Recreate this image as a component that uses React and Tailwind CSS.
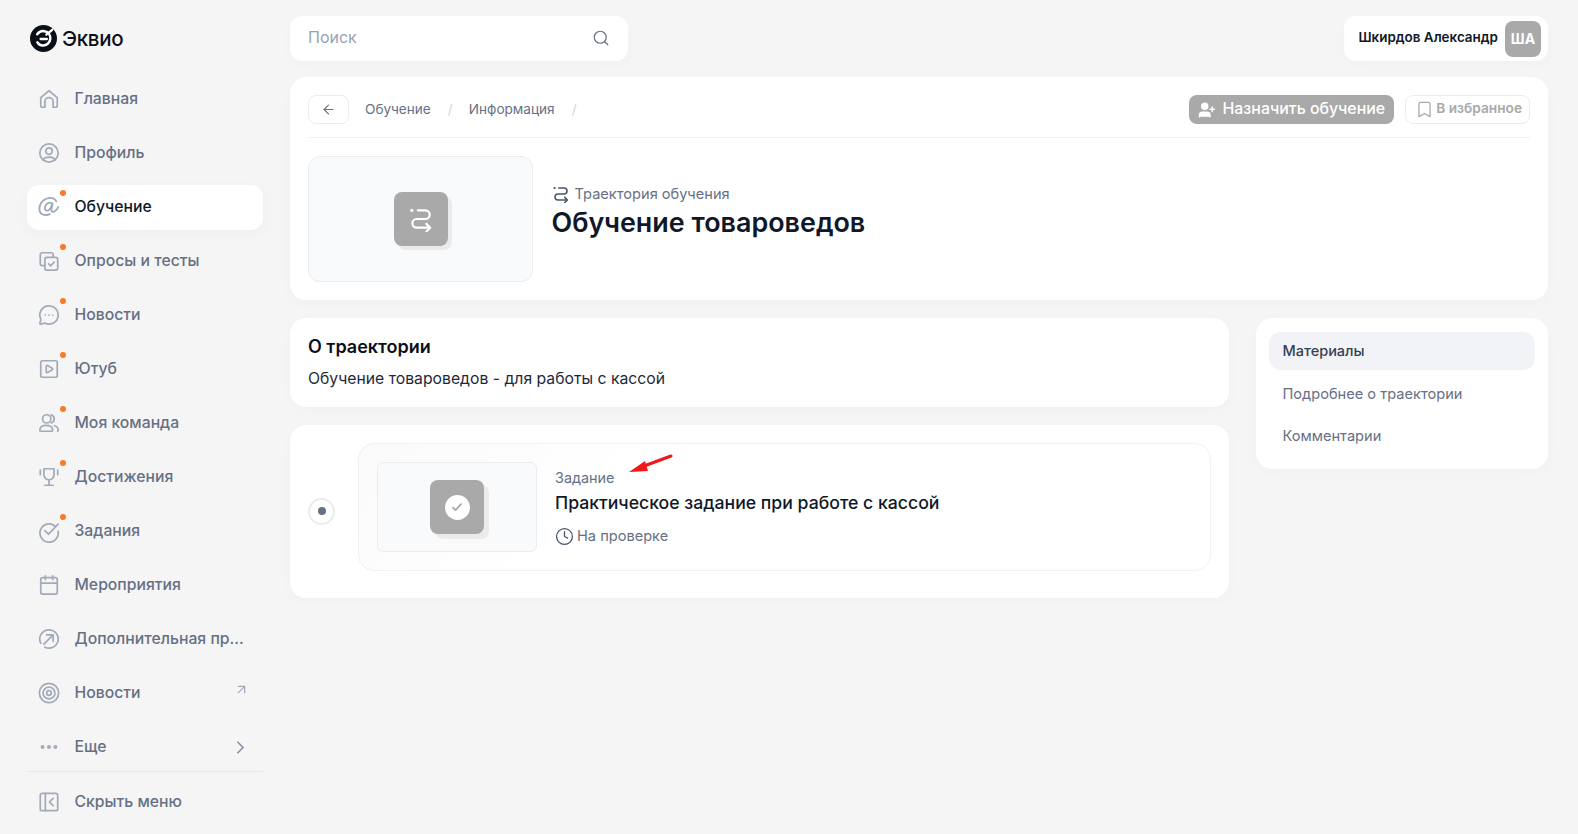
import React from 'react'
import { Search, ArrowLeft, Bookmark, UserPlus, Clock, MessageCircleMore, SquarePlay, Calendar, Ellipsis, ChevronRight, ArrowUpRight } from 'lucide-react'

const Svg = ({ children }) => (
  <svg viewBox="0 0 24 24" fill="none" stroke="currentColor" strokeWidth="1.9" strokeLinecap="round" strokeLinejoin="round" className="w-[24px] h-[24px]">
    {children}
  </svg>
)

const HomeIcon = () => (
  <Svg>
    <path d="M3 10.5 12 3l9 7.5V19a2 2 0 0 1-2 2h-2.5v-6a4.5 4.5 0 0 0-9 0v6H5a2 2 0 0 1-2-2z" />
  </Svg>
)

const ProfileIcon = () => (
  <Svg>
    <circle cx="12" cy="12" r="10" />
    <circle cx="12" cy="10" r="3.5" />
    <path d="M5.5 19.5c1-2 3-3 6.500-3s5.500 1 6.500 3" />
  </Svg>
)

const AtIcon = () => (
  <svg viewBox="0 0 24 24" fill="none" stroke="currentColor" strokeWidth="2" strokeLinecap="round" strokeLinejoin="round" className="w-[25px] h-[25px]">
    <path d="M20 6.500C18.500 3.500 16 2.500 13.500 2.500 7 2.500 1.500 8 1.500 14.500c0 4 2.500 6.800 7 6.800 1.500 0 3-.3 4.500-1" />
    <path d="M15.500 9.500c-1-1.500-2.500-2-4-1.500-2.500.8-4.500 4-4 6.500.4 2 2.500 2.500 4 1.500 2-1.300 3.500-4.500 4.500-7.500l-1.500 7c-.4 2 1.500 3 3.200 2 2-1.200 3.800-3 4.300-5" />
  </svg>
)

const CopyCheckIcon = () => (
  <Svg>
    <path d="M7.500 17H4.500a2 2 0 0 1-2-2V5a2 2 0 0 1 2-2h10a2 2 0 0 1 2 2v2.500" />
    <rect x="7.500" y="8" width="14" height="14" rx="2" />
    <path d="m11.500 15 2.200 2.200 4-4" />
  </Svg>
)

const UsersIcon = () => (
  <Svg>
    <circle cx="9.500" cy="7.500" r="4.500" />
    <path d="M14.500 3.200a4.500 4.500 0 0 1 0 8.600" />
    <path d="M2 19.500C2 16.500 5 14.500 9 14.500s7 2 7 5c0 1-.8 1.500-1.500 1.500h-11C2.800 21 2 20.500 2 19.500z" />
    <path d="M18 15c2.300.7 4 2.300 4 4.500 0 .5-.2 1-.5 1.500" />
  </Svg>
)

const TrophyIcon = () => (
  <Svg>
    <path d="M6.500 3h11v6.500a5.500 5.500 0 0 1-11 0z" />
    <path d="M12 15v6M7.500 21h9" />
    <path d="M2.500 4.500v5M21.500 4.500v5" />
  </Svg>
)

const TaskCheckIcon = () => (
  <Svg>
    <path d="M18.500 6.500A10 10 0 1 0 22 12.500" />
    <path d="m7.500 11.500 4 4L22 4.500" />
  </Svg>
)

const ArrowCircleIcon = () => (
  <Svg>
    <path d="M3 16.500A10 10 0 0 1 12 2a10 10 0 1 1-4.500 18.900" />
    <path d="M6.500 17.500 16.500 7.500M9.500 7.500h7v7" />
  </Svg>
)

const TargetIcon = () => (
  <Svg>
    <circle cx="12" cy="12" r="10.500" />
    <circle cx="12" cy="12" r="6.500" />
    <circle cx="12" cy="12" r="2.500" />
  </Svg>
)

const CollapseIcon = () => (
  <Svg>
    <rect x="2.500" y="2.500" width="19" height="19" rx="2" />
    <path d="M8 2.500v19M16.500 8l-4 4 4 4" />
  </Svg>
)

const RouteIcon = ({ className }) => (
  <svg viewBox="0 0 24 24" fill="none" stroke="currentColor" strokeWidth="2" strokeLinecap="round" strokeLinejoin="round" className={className}>
    <path d="M3.500 4h.01" strokeWidth="3" />
    <path d="M9 4h7a4 4 0 0 1 0 8H8a4 4 0 0 0 0 8h12" />
    <path d="m17 16.500 3.500 3.500-3.500 3.500" />
  </svg>
)

const menu = [
  { label: 'Главная', icon: <HomeIcon /> },
  { label: 'Профиль', icon: <ProfileIcon /> },
  { label: 'Обучение', icon: <AtIcon />, dot: true, active: true },
  { label: 'Опросы и тесты', icon: <CopyCheckIcon />, dot: true },
  { label: 'Новости', icon: <MessageCircleMore size={24} strokeWidth={1.9} />, dot: true },
  { label: 'Ютуб', icon: <SquarePlay size={24} strokeWidth={1.9} />, dot: true },
  { label: 'Моя команда', icon: <UsersIcon />, dot: true },
  { label: 'Достижения', icon: <TrophyIcon />, dot: true },
  { label: 'Задания', icon: <TaskCheckIcon />, dot: true },
  { label: 'Мероприятия', icon: <Calendar size={24} strokeWidth={1.9} /> },
  { label: 'Дополнительная пр...', icon: <ArrowCircleIcon /> },
  { label: 'Новости', icon: <TargetIcon />, external: true },
  { label: 'Еще', icon: <Ellipsis size={24} strokeWidth={2.4} />, chevron: true },
]

function MenuItem({ item }) {
  return (
    <div className={`relative flex items-center h-[45px] pl-[11px] pr-4 rounded-xl text-[15.75px] font-medium ${item.active ? 'bg-white text-[#101828] shadow-[0_4px_16px_rgba(0,0,0,0.03)]' : 'text-[#667085]'}`}>
      <span className="flex items-center justify-center w-[22px] pb-[2px] text-[#a3abba]">{item.icon}</span>
      <span className="ml-[14.5px] pb-[1px] flex-1 whitespace-nowrap">{item.label}</span>
      {item.dot && <span className="absolute left-[33px] top-[5px] w-[6px] h-[6px] rounded-full bg-[#f97a2a]" />}
      {item.external && <ArrowUpRight size={15} className="text-[#a3abba] -mt-[9px] -mr-[2px]" />}
      {item.chevron && <ChevronRight size={21} className="text-[#8a93a5] -mr-[4px]" />}
    </div>
  )
}

function Sidebar() {
  return (
    <aside className="w-[290px] shrink-0 pl-[27px] pr-[27px]">
      <div className="flex items-center h-[77px] pl-[3px] gap-[4px]">
        <svg viewBox="0 0 28 28" className="w-[27px] h-[27px]">
          <circle cx="14" cy="14" r="14" fill="#0b0f1a" />
          <path d="M7.500 9.500c2-2.700 5-3.500 7.500-3 4 .7 6.500 4 6 8-.5 4-3.800 7-7.800 6.800-2.400-.1-4.400-1.300-5.500-3.300" fill="none" stroke="#fff" strokeWidth="2.600" strokeLinecap="round" />
          <path d="M11 14.500h6.500M17 10l6-5" fill="none" stroke="#fff" strokeWidth="2.400" strokeLinecap="round" />
        </svg>
        <span className="ml-[1px] pt-[1px] text-[20.5px] font-medium tracking-[-0.3px] text-[#0b0f1a]">Эквио</span>
      </div>
      <nav className="flex flex-col gap-[9px]">
        {menu.map((item, i) => <MenuItem key={i} item={item} />)}
      </nav>
      <div className="border-t border-[#e5e7eb] mt-[1px] pt-[8px]">
        <MenuItem item={{ label: 'Скрыть меню', icon: <CollapseIcon /> }} />
      </div>
    </aside>
  )
}

function TopBar() {
  return (
    <div className="flex items-center justify-between">
      <div className="flex items-center justify-between w-[338px] h-[45px] bg-white rounded-xl pl-[18px] pr-[18px] shadow-[0_4px_16px_rgba(0,0,0,0.02)]">
        <span className="pb-[3px] text-[16px] text-[#98a2b3]">Поиск</span>
        <Search size={18} strokeWidth={1.6} className="text-[#667085] -mt-[1px]" />
      </div>
      <div className="flex items-center h-[45px] bg-white rounded-xl pl-[14px] pr-[7px] gap-[7px] shadow-[0_4px_16px_rgba(0,0,0,0.02)]">
        <span className="pb-[2px] text-[13.45px] font-semibold text-[#101828]">Шкирдов Александр</span>
        <span className="flex items-center justify-center w-[36px] h-[36px] rounded-lg bg-[#a9a9a9] pb-[1px] text-[14px] font-bold text-white">ША</span>
      </div>
    </div>
  )
}

function Header() {
  return (
    <section className="bg-white rounded-2xl p-[18px] shadow-[0_4px_16px_rgba(0,0,0,0.02)]">
      <div className="flex items-center justify-between pb-[13px] border-b border-[#f0f1f3]">
        <div className="flex items-center text-[13.6px] text-[#667085]">
          <button className="flex items-center justify-center w-[41px] h-[29px] border border-[#eaecf0] rounded-lg text-[#667085]">
            <ArrowLeft size={15} strokeWidth={1.8} />
          </button>
          <span className="ml-[16px] pb-[1px]">Обучение</span>
          <span className="ml-[17px] text-[#d0d5dd]">/</span>
          <span className="ml-[16px] pb-[1px]">Информация</span>
          <span className="ml-[17px] text-[#d0d5dd]">/</span>
        </div>
        <div className="flex items-center gap-[11px]">
          <button className="flex items-center h-[29px] pl-[9px] pr-[9px] gap-[7px] rounded-lg bg-[#a9a9a9] text-white text-[15.9px] font-medium">
            <UserPlus size={18} fill="currentColor" strokeWidth={2} />
            <span className="pb-[2px]">Назначить обучение</span>
          </button>
          <button className="flex items-center h-[29px] pl-[9px] pr-[7px] gap-[2px] rounded-lg border border-[#eaecf0] text-[#a9a9a9] text-[13.7px] font-semibold">
            <Bookmark size={19} strokeWidth={1.6} />
            <span className="pb-[2px]">В избранное</span>
          </button>
        </div>
      </div>
      <div className="flex items-center mt-[18px] gap-[18.5px]">
        <div className="flex items-center justify-center w-[225px] h-[126px] rounded-xl bg-[#f9fafb] border border-[#eaecf0]">
          <div className="flex items-center justify-center w-[54px] h-[54px] rounded-lg bg-[#a9a9a9] text-white shadow-[4px_4px_0_#ebebeb]">
            <RouteIcon className="w-[26px] h-[26px]" />
          </div>
        </div>
        <div className="pb-[16px]">
          <div className="flex items-center gap-[5px] text-[14.6px] text-[#667085]">
            <RouteIcon className="w-[18px] h-[18px] text-[#475467]" />
            <span>Траектория обучения</span>
          </div>
          <h1 className="mt-[1px] text-[26.9px] font-semibold leading-[32px] text-[#101828]">Обучение товароведов</h1>
        </div>
      </div>
    </section>
  )
}

function TaskCard() {
  return (
    <section className="flex items-center bg-white rounded-2xl pt-[18px] px-[18px] pb-[27px] shadow-[0_4px_16px_rgba(0,0,0,0.02)]">
      <span className="flex items-center justify-center shrink-0 mt-[8px] w-[27px] h-[27px] rounded-full border-2 border-[#eaecf0]">
        <span className="w-[8px] h-[8px] rounded-full bg-[#667085]" />
      </span>
      <div className="relative flex flex-1 ml-[23px] p-[18px] gap-[18px] rounded-2xl border border-[#f0f1f3] bg-[linear-gradient(135deg,#fafafb,#ffffff_30%)]">
        <div className="flex items-center justify-center w-[160px] h-[90px] rounded-md bg-[#f9fafb] border border-[#eaecf0]">
          <div className="flex items-center justify-center w-[54px] h-[54px] rounded-lg bg-[#a9a9a9] shadow-[5px_5px_0_#ebebeb]">
            <span className="flex items-center justify-center w-[25px] h-[25px] rounded-full bg-white">
              <svg viewBox="0 0 24 24" fill="none" stroke="#a9a9a9" strokeWidth="3" strokeLinecap="round" strokeLinejoin="round" className="w-[14px] h-[14px]">
                <path d="m5 13 4.500 4.500L19 7" />
              </svg>
            </span>
          </div>
        </div>
        <div className="flex flex-col pt-[6px]">
          <span className="text-[14.4px] leading-[20px] text-[#667085]">Задание</span>
          <span className="text-[17.65px] leading-[28px] font-medium text-[#101828] mt-[1px]">Практическое задание при работе с кассой</span>
          <span className="flex items-center gap-[3px] text-[14.6px] leading-[20px] text-[#667085] mt-[9px]">
            <Clock size={19} strokeWidth={1.6} className="text-[#475467]" />
            На проверке
          </span>
        </div>
        {/* red annotation arrow */}
        <svg viewBox="0 0 46 20" className="absolute left-[269px] top-[10px] w-[46px] h-[20px]">
          <path d="M43 2 12 13.500" stroke="#f01818" strokeWidth="3" strokeLinecap="round" />
          <path d="M1 18 17 7l3 10z" fill="#f01818" />
        </svg>
      </div>
    </section>
  )
}

export default function App() {
  return (
    <div className="flex min-h-[834px] bg-[#f5f5f5] font-['Inter',sans-serif]">
      <Sidebar />
      <main className="flex-1 flex flex-col gap-[16px] pt-[16px] pr-[30px]">
        <TopBar />
        <Header />
        <div className="flex items-start gap-[27px] mt-[2px]">
          <div className="flex flex-col gap-[18px] w-[939px]">
            <section className="bg-white rounded-2xl pt-[19px] px-[18px] h-[89px] shadow-[0_4px_16px_rgba(0,0,0,0.02)]">
              <h2 className="text-[18px] leading-[20px] font-semibold text-[#0b0f1a]">О траектории</h2>
              <p className="text-[15.75px] leading-[24px] mt-[10px] text-[#1d2939]">Обучение товароведов - для работы с кассой</p>
            </section>
            <TaskCard />
          </div>
          <aside className="flex-1 bg-white rounded-2xl pt-[14px] px-[13px] h-[151px] shadow-[0_4px_16px_rgba(0,0,0,0.02)] text-[14.6px]">
            <div className="flex items-center h-[38px] px-[13.5px] rounded-xl bg-[#f2f3f6] text-[14.5px] text-[#344054] font-medium">Материалы</div>
            <div className="flex items-center h-[38px] px-[13.5px] mt-[6px] text-[#667085]">Подробнее о траектории</div>
            <div className="flex items-center h-[38px] px-[13.5px] mt-[4px] text-[#667085]">Комментарии</div>
          </aside>
        </div>
      </main>
    </div>
  )
}
